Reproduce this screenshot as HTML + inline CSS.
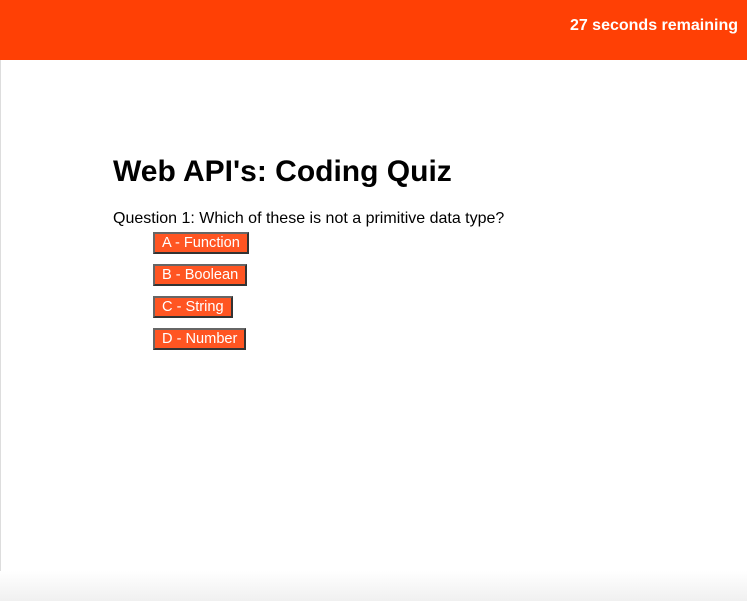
<!DOCTYPE html>
<html><head><meta charset="utf-8"><style>
html,body{margin:0;padding:0;width:747px;height:601px;overflow:hidden;background:#fff;font-family:"Liberation Sans",Arial,sans-serif;position:relative}
.hdr{position:absolute;left:0;top:0;width:747px;height:60px;background:#ff4005}
.hdr span{position:absolute;right:9px;top:17px;color:#fff;font-weight:bold;font-size:16px}
.edge{position:absolute;left:0;top:60px;width:1px;height:541px;background:#ddd}
.shade{position:absolute;left:0;bottom:0;width:747px;height:30px;background:linear-gradient(#fff,#f0f0f0)}
h1{position:absolute;left:113px;top:155px;margin:0;font-size:30px;font-weight:bold;color:#000}
.q{position:absolute;left:113px;top:210px;font-size:16px;color:#000}
.b{position:absolute;left:153px;height:18px;line-height:18px;padding:0 7px;background:#ff5522;color:#fff;font-size:14.6px;border:2px solid #555;border-top-color:#666;border-left-color:#666;border-right-color:#333;border-bottom-color:#333}
</style></head><body>
<div class="hdr"><span>27 seconds remaining</span></div>
<div class="edge"></div>
<div class="shade"></div>
<h1>Web API's: Coding Quiz</h1>
<div class="q">Question 1: Which of these is not a primitive data type?</div>
<div class="b" style="top:232px">A - Function</div>
<div class="b" style="top:264px">B - Boolean</div>
<div class="b" style="top:296px">C - String</div>
<div class="b" style="top:328px">D - Number</div>
</body></html>
